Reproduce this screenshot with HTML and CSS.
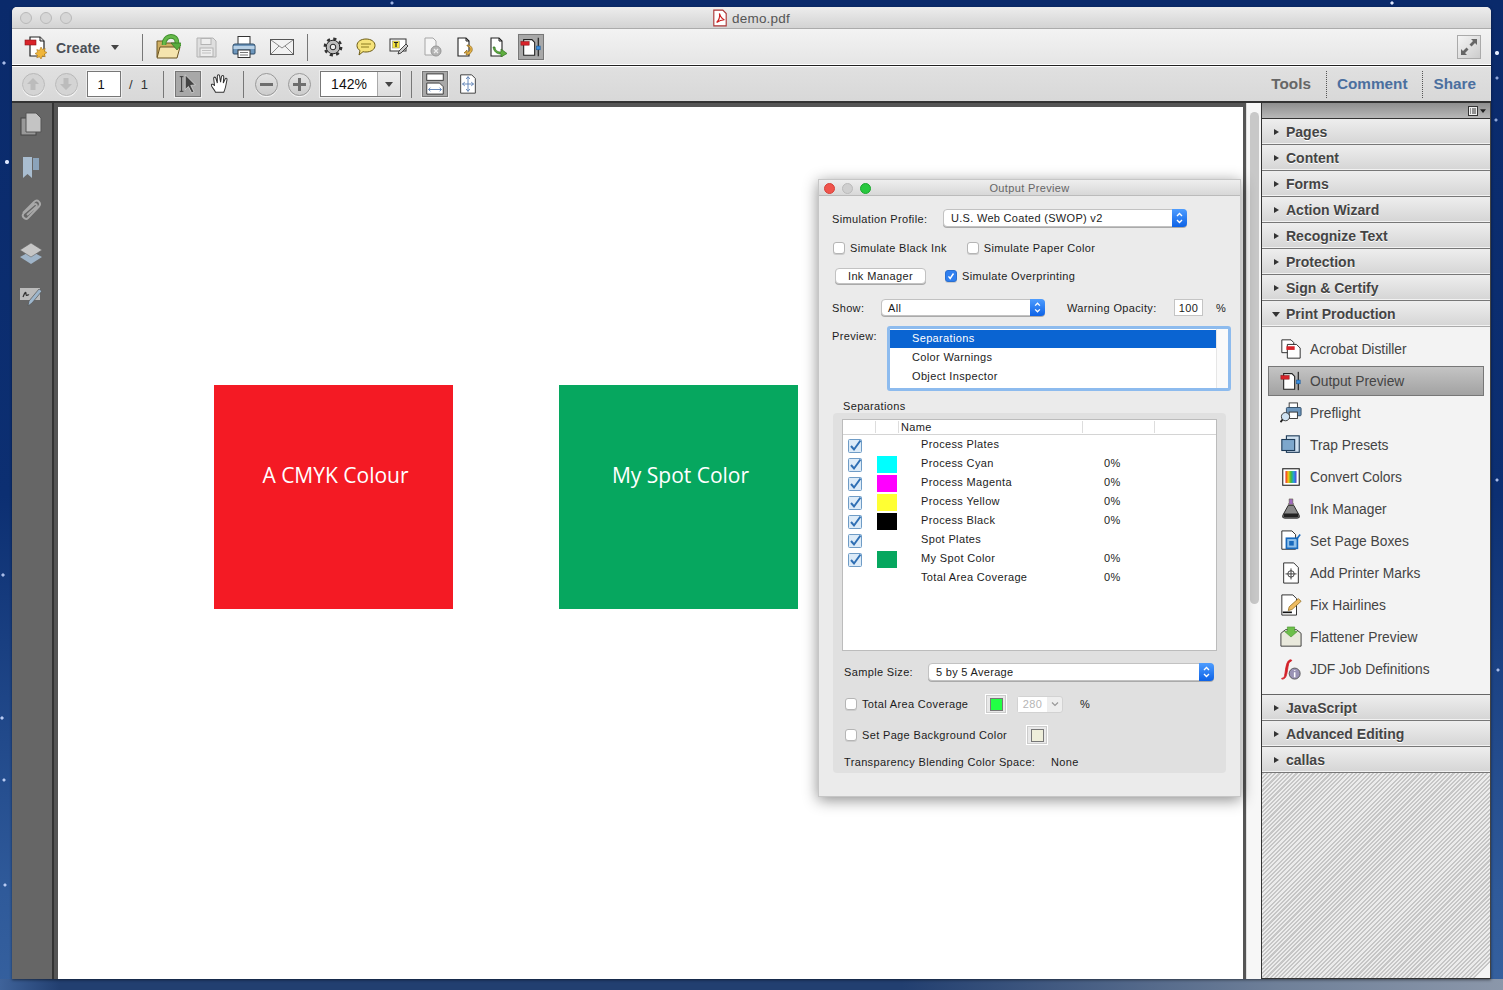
FILE: index.html
```html
<!DOCTYPE html>
<html lang="en">
<head>
<meta charset="utf-8">
<title>demo.pdf</title>
<link rel="stylesheet" href="styles.css">
</head>
<body>
<svg class="defs" width="0" height="0">
  <symbol id="tick" viewBox="0 0 14 14">
    <rect x=".5" y=".5" width="13" height="13" rx="1" fill="#dcebf8" stroke="#6f9cc6"/>
    <path d="M3 7l3 3.5L12.5 1.5" fill="none" stroke="#2f6fb4" stroke-width="2"/>
  </symbol>
  <symbol id="updown" viewBox="0 0 14 18">
    <path d="M4.500 7L7 4.500 9.500 7M4.500 11L7 13.500 9.500 11" fill="none" stroke="#fff" stroke-width="1.400"/>
  </symbol>
  <symbol id="tri" viewBox="0 0 8 8"><path d="M2 1l5 3-5 3z" fill="#333"/></symbol>
  <symbol id="output" viewBox="0 0 24 24">
    <path d="M4 4h9l3 3v14H4z" fill="#fff" stroke="#222" stroke-width="1.200"/>
    <rect x="1" y="6" width="9" height="4" fill="#d8232a" stroke="#8a1519" stroke-width=".6"/>
    <path d="M20 2v20" stroke="#333" stroke-width="1.500"/>
    <rect x="18" y="11" width="4" height="4" fill="#3b8ede" stroke="#1b5c9c" stroke-width=".7"/>
  </symbol>
</svg>

<main class="window">
  <header class="titlebar">
    <div class="lights">
      <span class="light"></span><span class="light"></span><span class="light"></span>
    </div>
    <div class="doc-title">
      <svg class="title-icon" viewBox="0 0 16 16"><path d="M2.500 1h8l3 3v11h-11z" fill="#fff" stroke="#a33" stroke-width="1"/><path d="M5 12c2-2 3-5 2.500-8 1 3 2.500 5 4.500 5.500-2.500 0-5 1-7 2.500z" fill="none" stroke="#c22" stroke-width="1"/></svg>
      <span>demo.pdf</span>
    </div>
  </header>

  <div class="toolbar top">
    <div class="create">
      <svg class="ic24" viewBox="0 0 24 24"><path d="M6 2h10l4 4v15H6z" fill="#fff" stroke="#222" stroke-width="1.200"/><path d="M16 2v4h4" fill="#ddd" stroke="#222"/><rect x="1" y="5" width="11" height="5" fill="#d8232a" stroke="#8a1519" stroke-width=".6"/><path d="M17 12l1.500 2.500 2.700-1-.7 2.800 2.500 1.200-2.500 1.500.7 2.800-2.700-1L17 24l-1.500-2.200-2.700 1 .7-2.800-2.500-1.500 2.500-1.200-.7-2.800 2.700 1z" fill="#f0b63a" stroke="#a9761a" stroke-width=".6"/></svg>
      <span class="create-label">Create</span>
      <svg class="caret" viewBox="0 0 8 5"><path d="M0 0h8L4 5z" fill="#444"/></svg>
    </div>
    <span class="sep"></span>
    <div class="group wide">
      <span class="btn"><svg class="ic26" viewBox="0 0 26 26"><path d="M2 7h7l2 2h11v14H2z" fill="#cfae62" stroke="#6b5423"/><path d="M2 24l3-11h20l-3 11z" fill="#f5e4ae" stroke="#6b5423"/><path d="M9 11C9 4 14 1 19 3c2 1 3 3 3 6" fill="none" stroke="#3f8f2c" stroke-width="4.600"/><path d="M9 11C9 4 14 1 19 3c2 1 3 3 3 6" fill="none" stroke="#66b94a" stroke-width="2.800"/><path d="M16 9h12l-6 7z" fill="#58ad3e" stroke="#2e6f20" stroke-width=".7"/></svg></span>
      <span class="btn"><svg class="ic24 dim" viewBox="0 0 24 24"><path d="M3 3h16l3 3v16H3z" fill="#ddd" stroke="#aaa"/><rect x="7" y="3.500" width="10" height="6" fill="#eee" stroke="#aaa"/><rect x="6" y="13" width="13" height="8.500" fill="#eee" stroke="#aaa"/><path d="M8 15.500h9M8 18h9" stroke="#bbb"/></svg></span>
      <span class="btn"><svg class="ic24" viewBox="0 0 24 24"><rect x="6" y="1.500" width="12" height="8" fill="#fff" stroke="#333"/><path d="M3 9h18q2 0 2 2v7q0 1-1 1H2q-1 0-1-1v-7q0-2 2-2z" fill="#6d96bc" stroke="#2d4a66"/><rect x="1.500" y="11" width="21" height="3" fill="#b9d1e6"/><rect x="6" y="15" width="12" height="7.500" fill="#fff" stroke="#333"/><path d="M8 17.500h8M8 20h8" stroke="#777"/></svg></span>
      <span class="btn"><svg class="ic24-w" viewBox="0 0 24 18"><rect x=".5" y="1.500" width="23" height="15" fill="#f2f2f2" stroke="#555"/><path d="M1 2l11 8 11-8M1 16l8-8M23 16l-8-8" fill="none" stroke="#888"/></svg></span>
    </div>
    <span class="sep"></span>
    <div class="group">
      <span class="btn"><svg class="ic20" viewBox="0 0 20 20"><circle cx="10" cy="10" r="8.200" fill="none" stroke="#333" stroke-width="2.400" stroke-dasharray="3.200 3.240"/><circle cx="10" cy="10" r="6.800" fill="#bdbdbd" stroke="#222"/><circle cx="10" cy="10" r="2.800" fill="#eee" stroke="#222"/></svg></span>
      <span class="btn"><svg class="ic20" viewBox="0 0 20 18"><path d="M10 1c5 0 9 2.500 9 6.500S15 14 10 14c-1 0-2 0-3-.3L3 17l1-4.500C2 11.500 1 9.500 1 7.500 1 3.500 5 1 10 1z" fill="#f6e37a" stroke="#6c5c16"/><path d="M5 6h10M5 9h8" stroke="#8b7a20"/></svg></span>
      <span class="btn"><svg class="ic20" viewBox="0 0 20 20"><rect x="1" y="2" width="16" height="12" fill="#fff" stroke="#333"/><rect x="3.500" y="4" width="7" height="7" fill="#f5e23a" stroke="#888" stroke-width=".5"/><path d="M5 5.500h4M7 5.500v4.500" stroke="#222" stroke-width="1.200"/><path d="M9 17l1-3 7-7 2 2-7 7z" fill="#ccc" stroke="#333" stroke-width=".9"/></svg></span>
      <span class="btn"><svg class="ic20 dim" viewBox="0 0 20 20"><path d="M3 1h8l3 3v14H3z" fill="#f7f7f7" stroke="#999"/><circle cx="14" cy="14" r="5" fill="#aaa" stroke="#888"/><path d="M12 12l4 4M16 12l-4 4" stroke="#eee" stroke-width="1.200"/></svg></span>
      <span class="btn"><svg class="ic20" viewBox="0 0 20 20"><path d="M3 1h8l3 3v15H3z" fill="#fff" stroke="#222" stroke-width="1.100"/><path d="M11 1v3h3" fill="none" stroke="#222"/><path d="M12 8c4 0 6 3 5 6-1 2-3 4-6 4l1-2-3 0 3-3v2c2 0 3-1 3-3 0-1-1-3-3-3z" fill="#e8b54a" stroke="#8c6516" stroke-width=".7"/></svg></span>
      <span class="btn"><svg class="ic20" viewBox="0 0 20 20"><path d="M3 1h8l3 3v15H3z" fill="#fff" stroke="#222" stroke-width="1.100"/><path d="M11 1v3h3" fill="none" stroke="#222"/><path d="M7 10c0 3 2 5 6 5v-3l6 4.500-6 3.500v-3c-4 0-7-2-8-7z" fill="#5fae3f" stroke="#2e6f20" stroke-width=".7"/></svg></span>
      <span class="btn active"><svg class="ic22" viewBox="0 0 24 24"><use href="#output"/></svg></span>
    </div>
    <span class="expand"><svg class="ic18" viewBox="0 0 18 18"><path d="M11 1h6v6l-2-2-3.500 3.500-2-2L13 3zM7 17H1v-6l2 2 3.500-3.500 2 2L5 15z" fill="#666"/></svg></span>
  </div>

  <div class="toolbar sub">
    <div class="group nav">
      <span class="btn"><span class="round"><svg class="ic14" viewBox="0 0 14 14"><path d="M7 1l6 6H9.500v6h-5V7H1z" fill="#bcbcbc"/></svg></span></span>
      <span class="btn"><span class="round"><svg class="ic14" viewBox="0 0 14 14"><path d="M7 13L1 7h3.500V1h5v6H13z" fill="#bcbcbc"/></svg></span></span>
    </div>
    <span class="page-input">1</span>
    <span class="page-total"><span>/</span><span>1</span></span>
    <span class="sep"></span>
    <div class="group tools-group">
      <span class="btn active"><svg class="ic22" viewBox="0 0 24 24"><path d="M3 4h4M3 20h4M5 4v16" stroke="#333" fill="none"/><path d="M9 2l11 11-5 .5 3.500 7-2.500 1.200-3.500-7L9 18z" fill="#444" stroke="#eee" stroke-width=".7"/></svg></span>
      <span class="btn"><svg class="ic22" viewBox="0 0 24 24"><path d="M6 21c-1-3-5-6-4.500-8 .5-1.500 2.500-.5 3.500 1L4 6c0-2 2-2 2.500 0L8 11 8 3.500c0-2 2.500-2 2.500 0L11.500 10l1-6c.5-2 2.500-1.500 2.500 0l-.5 7 2-4.500c1-1.500 2.500-.5 2 1L17 15c-.5 2-1 4-2 6z" fill="#fff" stroke="#333" stroke-width="1.100"/></svg></span>
    </div>
    <span class="sep"></span>
    <div class="group zoom-group">
      <span class="btn"><span class="round big"><i class="minus"></i></span></span>
      <span class="btn"><span class="round big"><i class="minus"></i><i class="minus vert"></i></span></span>
    </div>
    <div class="zoom-box">
      <span class="zoom-value">142%</span>
      <span class="zoom-drop"><svg class="caret" viewBox="0 0 8 5"><path d="M0 0h8L4 5z" fill="#444"/></svg></span>
    </div>
    <span class="sep"></span>
    <div class="group fit-group">
      <span class="btn active"><svg class="ic22" viewBox="0 0 24 24"><rect x="3" y="1" width="18" height="7" fill="#fff" stroke="#333"/><path d="M3 11h14l4 4v8H3z" fill="#fff" stroke="#333"/><path d="M5 18h14M5 18l2-2M5 18l2 2M19 18l-2-2M19 18l-2 2" stroke="#5a7fb5" fill="none"/></svg></span>
      <span class="btn"><svg class="ic22" viewBox="0 0 24 24"><path d="M4 2h12l4 4v16H4z" fill="#fff" stroke="#333"/><path d="M12 4v16M6 12h12M12 4l-2 2.500M12 4l2 2.500M12 20l-2-2.500M12 20l2-2.500M6 12l2.500-2M6 12l2.500 2M18 12l-2.500-2M18 12l-2.500 2" stroke="#5a7fb5" fill="none"/></svg></span>
    </div>
    <nav class="tabs">
      <span class="tab tools">Tools</span>
      <span class="tab comment">Comment</span>
      <span class="tab share">Share</span>
    </nav>
  </div>

  <div class="body">
    <aside class="rail">
      <svg class="ic24" viewBox="0 0 24 24"><rect x="2" y="6" width="15" height="17" fill="#999" stroke="#444"/><path d="M7 1h10l5 5v14H7z" fill="#c4c4c4" stroke="#555"/></svg>
      <svg class="ic24" viewBox="0 0 24 24"><path d="M4 2h9v21l-4.500-4L4 23z" fill="#a9bdd0"/><path d="M14 3h6v12h-6z" fill="#8ba3ba"/></svg>
      <svg class="ic24" viewBox="0 0 24 24"><path d="M4 15L15 4c3.500-3.500 8 1 5 4.500L9 20c-2.500 2.500-7-1.500-4.500-4.500L15 6.500c2-1.500 3.500.5 2.500 2L8 17" fill="none" stroke="#a8a8a8" stroke-width="1.900"/></svg>
      <svg class="ic24" viewBox="0 0 24 24"><path d="M12 10l11 6-11 7-11-7z" fill="#9fb4c8"/><path d="M12 2l11 7-11 7L1 9z" fill="#c6c6c6" stroke="#666" stroke-width=".6"/></svg>
      <svg class="ic24" viewBox="0 0 24 24"><rect x="1" y="4" width="20" height="12" fill="#bbb"/><path d="M4 13c2-5 3-6 3-3s2 0 3 1" fill="none" stroke="#333" stroke-width="1.200"/><path d="M9 22l1-5 10-12 3 2-10 12z" fill="#9db6cc" stroke="#555" stroke-width=".7"/></svg>
    </aside>

    <section class="doc">
      <div class="page">
        <div class="swatch-card red">A CMYK Colour</div>
        <div class="swatch-card green">My Spot Color</div>
      </div>
    </section>

    <div class="scrollbar"><span class="thumb"></span></div>

    <aside class="panel">
      <div class="panel-top">
        <svg class="ic10" viewBox="0 0 10 10"><rect x=".5" y=".5" width="9" height="9" fill="#eee" stroke="#333"/><path d="M2 3h1M2 5h1M2 7h1M4 3h4M4 5h4M4 7h4" stroke="#333"/></svg>
        <svg class="caret small" viewBox="0 0 8 5"><path d="M0 0h8L4 5z" fill="#222"/></svg>
      </div>
      <div class="sec"><svg class="tri" viewBox="0 0 8 8"><use href="#tri"/></svg>Pages</div>
      <div class="sec"><svg class="tri" viewBox="0 0 8 8"><use href="#tri"/></svg>Content</div>
      <div class="sec"><svg class="tri" viewBox="0 0 8 8"><use href="#tri"/></svg>Forms</div>
      <div class="sec"><svg class="tri" viewBox="0 0 8 8"><use href="#tri"/></svg>Action Wizard</div>
      <div class="sec"><svg class="tri" viewBox="0 0 8 8"><use href="#tri"/></svg>Recognize Text</div>
      <div class="sec"><svg class="tri" viewBox="0 0 8 8"><use href="#tri"/></svg>Protection</div>
      <div class="sec"><svg class="tri" viewBox="0 0 8 8"><use href="#tri"/></svg>Sign &amp; Certify</div>
      <div class="sec open"><svg class="tri" viewBox="0 0 8 8"><path d="M0 2h8L4 7z" fill="#333"/></svg>Print Production</div>
      <ul class="tools-list">
        <li><svg class="li-ic" viewBox="0 0 24 24"><path d="M2 2h10l3 3v11H2z" fill="#fff" stroke="#222"/><path d="M8 7h10l4 4v11H8z" fill="#fff" stroke="#222"/><rect x="7" y="9" width="9" height="4" fill="#d8232a"/></svg>Acrobat Distiller</li>
        <li class="current"><svg class="li-ic" viewBox="0 0 24 24"><use href="#output"/></svg>Output Preview</li>
        <li><svg class="li-ic" viewBox="0 0 24 24"><rect x="10" y="1" width="9" height="6" fill="#fff" stroke="#333"/><rect x="7" y="6" width="16" height="9" rx="1" fill="#6d96bc" stroke="#2d4a66"/><rect x="10" y="11" width="9" height="7" fill="#fff" stroke="#333"/><circle cx="6" cy="16" r="4.500" fill="#cfe2f2" stroke="#333"/><path d="M3 19l-2.500 3" stroke="#222" stroke-width="2"/></svg>Preflight</li>
        <li><svg class="li-ic" viewBox="0 0 24 24"><rect x="7" y="2" width="14" height="18" fill="#cfe0ef" stroke="#1d3a57" stroke-width="1.200"/><rect x="2" y="6" width="14" height="12" fill="#7da7cc" stroke="#1d3a57" stroke-width="1.200"/></svg>Trap Presets</li>
        <li><svg class="li-ic" viewBox="0 0 24 24"><defs><linearGradient id="rainbow"><stop offset="0" stop-color="#e22"/><stop offset=".25" stop-color="#f6c613"/><stop offset=".5" stop-color="#3dbb3d"/><stop offset=".75" stop-color="#22a0e0"/><stop offset="1" stop-color="#5a3fd0"/></linearGradient></defs><rect x="3" y="3" width="18" height="18" fill="#fff" stroke="#222" stroke-width="1.200"/><rect x="6" y="5.500" width="12" height="13" fill="url(#rainbow)"/></svg>Convert Colors</li>
        <li><svg class="li-ic" viewBox="0 0 24 24"><path d="M10 1h4v4l1 2H9l1-2z" fill="#a06bc0" stroke="#553" stroke-width=".6"/><path d="M9 8h6l6 11q1 3-2 3H5q-3 0-2-3z" fill="#888" stroke="#222"/><path d="M4 17h16v3q0 1-1 1H5q-1 0-1-1z" fill="#222"/></svg>Ink Manager</li>
        <li><svg class="li-ic" viewBox="0 0 24 24"><path d="M2 1h11l4 4v16H2z" fill="#fff" stroke="#222"/><rect x="7" y="9" width="12" height="11" fill="#8fc0ea" stroke="#1769bd" stroke-width="1.800"/><rect x="10" y="12" width="5" height="5" fill="#1769bd"/><path d="M22 5l-4 5" stroke="#1769bd" stroke-width="1.800"/></svg>Set Page Boxes</li>
        <li><svg class="li-ic" viewBox="0 0 24 24"><path d="M4 1h11l5 5v17H4z" fill="#fff" stroke="#222"/><circle cx="12" cy="13" r="3.500" fill="none" stroke="#333"/><path d="M12 7v12M6 13h12" stroke="#333"/></svg>Add Printer Marks</li>
        <li><svg class="li-ic" viewBox="0 0 24 24"><path d="M2 1h12l4 4v18H2z" fill="#fff" stroke="#222"/><path d="M3 20h10" stroke="#111" stroke-width="1.800"/><path d="M9 18l1-4 10-9 3 3-10 9z" fill="#eebc62" stroke="#8c6516" stroke-width=".8"/></svg>Fix Hairlines</li>
        <li><svg class="li-ic" viewBox="0 0 24 24"><path d="M1 8l5-4h12l5 4v14H1z" fill="#e9e9dc" stroke="#333"/><path d="M8 1h8v5h3l-7 6-7-6h3z" fill="#6dc04a" stroke="#3f8a27" stroke-width=".6"/></svg>Flattener Preview</li>
        <li><svg class="li-ic" viewBox="0 0 24 24"><path d="M2 22c3 0 3-2 4-9 1-6 2-11 6-11 1 0 1 2-1 2-2 1-2 5-3 10-1 6-2 9-6 9z" fill="#d32027" stroke="#d32027"/><circle cx="16" cy="17" r="6" fill="#9a93b5" stroke="#555"/><path d="M16 13v1M16 15.500V21" stroke="#fff" stroke-width="1.700"/></svg>JDF Job Definitions</li>
      </ul>
      <div class="sec"><svg class="tri" viewBox="0 0 8 8"><use href="#tri"/></svg>JavaScript</div>
      <div class="sec"><svg class="tri" viewBox="0 0 8 8"><use href="#tri"/></svg>Advanced Editing</div>
      <div class="sec"><svg class="tri" viewBox="0 0 8 8"><use href="#tri"/></svg>callas</div>
      <div class="hatch"></div>
    </aside>
  </div>

  <section class="palette">
    <header class="pal-title">
      <span class="pal-lights"><i class="close"></i><i class="mini"></i><i class="zoom"></i></span>
      <span>Output Preview</span>
    </header>
    <div class="pal-body">
      <div class="row row-profile">
        <span class="lbl-profile">Simulation Profile:</span>
        <span class="select sel-profile">U.S. Web Coated (SWOP) v2<b class="stepper"><svg viewBox="0 0 14 18"><use href="#updown"/></svg></b></span>
      </div>
      <div class="row row-sim">
        <label class="check"><i class="cb"></i>Simulate Black Ink</label>
        <label class="check second"><i class="cb"></i>Simulate Paper Color</label>
      </div>
      <div class="row row-ink">
        <span class="push-button">Ink Manager</span>
        <label class="check over"><i class="cb on"><svg viewBox="0 0 12 12"><path d="M3 6.500l2 2.500 4-6" fill="none" stroke="#fff" stroke-width="1.700"/></svg></i>Simulate Overprinting</label>
      </div>
      <div class="row row-show">
        <span class="lbl-show">Show:</span>
        <span class="select sel-show">All<b class="stepper"><svg viewBox="0 0 14 18"><use href="#updown"/></svg></b></span>
        <span class="lbl-warn">Warning Opacity:</span>
        <span class="opacity">100</span>
        <span class="pct">%</span>
      </div>
      <div class="row row-preview">
        <span class="lbl-preview">Preview:</span>
        <div class="listbox">
          <div class="opt sel">Separations</div>
          <div class="opt">Color Warnings</div>
          <div class="opt">Object Inspector</div>
        </div>
      </div>
      <div class="sep-label">Separations</div>
      <div class="groupbox">
        <div class="table">
          <div class="thead"><span></span><span></span><span>Name</span><span></span><span></span></div>
          <div class="tr"><svg class="tk" viewBox="0 0 14 14"><use href="#tick"/></svg><span></span><span class="nm">Process Plates</span><span></span></div>
          <div class="tr"><svg class="tk" viewBox="0 0 14 14"><use href="#tick"/></svg><span class="sw cyan"></span><span class="nm">Process Cyan</span><span class="pv">0%</span></div>
          <div class="tr"><svg class="tk" viewBox="0 0 14 14"><use href="#tick"/></svg><span class="sw magenta"></span><span class="nm">Process Magenta</span><span class="pv">0%</span></div>
          <div class="tr"><svg class="tk" viewBox="0 0 14 14"><use href="#tick"/></svg><span class="sw yellow"></span><span class="nm">Process Yellow</span><span class="pv">0%</span></div>
          <div class="tr"><svg class="tk" viewBox="0 0 14 14"><use href="#tick"/></svg><span class="sw black"></span><span class="nm">Process Black</span><span class="pv">0%</span></div>
          <div class="tr"><svg class="tk" viewBox="0 0 14 14"><use href="#tick"/></svg><span></span><span class="nm">Spot Plates</span><span></span></div>
          <div class="tr"><svg class="tk" viewBox="0 0 14 14"><use href="#tick"/></svg><span class="sw spot"></span><span class="nm">My Spot Color</span><span class="pv">0%</span></div>
          <div class="tr"><span></span><span></span><span class="nm">Total Area Coverage</span><span class="pv">0%</span></div>
        </div>
        <div class="row row-sample">
          <span class="lbl-sample">Sample Size:</span>
          <span class="select sel-sample">5 by 5 Average<b class="stepper"><svg viewBox="0 0 14 18"><use href="#updown"/></svg></b></span>
        </div>
        <div class="row row-total">
          <label class="check tac"><i class="cb"></i>Total Area Coverage</label>
          <span class="well"><i class="lime"></i></span>
          <span class="combo"><span>280</span><b><svg viewBox="0 0 10 8"><path d="M2 2.500l3 3 3-3" fill="none" stroke="#999" stroke-width="1.200"/></svg></b></span>
          <span class="pct2">%</span>
        </div>
        <div class="row row-bg">
          <label class="check spb"><i class="cb"></i>Set Page Background Color</label>
          <span class="well"><i class="paper"></i></span>
        </div>
        <div class="row row-trans">
          <span class="lbl-trans">Transparency Blending Color Space:</span>
          <span>None</span>
        </div>
      </div>
    </div>
  </section>
</main>
</body>
</html>
```

FILE: styles.css
```css
* { box-sizing: border-box; }
html, body { margin: 0; height: 100%; }
body {
  width: 1503px; height: 990px; overflow: hidden;
  padding: 7px 12px 11px;
  font-family: "Liberation Sans", Arial, sans-serif;
  background:
    radial-gradient(circle at 7px 162px, #dfe8ff 0 1.500px, transparent 2.500px),
    radial-gradient(circle at 4px 63px, #a9bce8 0 1.200px, transparent 2px),
    radial-gradient(circle at 3px 575px, #a9bce8 0 1.200px, transparent 2px),
    radial-gradient(circle at 2px 718px, #b9cbf3 0 1.200px, transparent 2px),
    radial-gradient(circle at 4px 780px, #b9cbf3 0 1px, transparent 2px),
    radial-gradient(circle at 5px 885px, #b9cbf3 0 1px, transparent 2px),
    radial-gradient(circle at 1497px 53px, #e6eeff 0 1.500px, transparent 2.500px),
    radial-gradient(circle at 1497px 78px, #8fa6d8 0 1px, transparent 2px),
    radial-gradient(circle at 1496px 120px, #8fa6d8 0 1px, transparent 2px),
    radial-gradient(circle at 1497px 480px, #a9bce8 0 1px, transparent 2px),
    radial-gradient(circle at 1498px 670px, #a9bce8 0 1px, transparent 2px),
    radial-gradient(circle at 392px 3px, #9fb4e4 0 1px, transparent 2px),
    radial-gradient(circle at 1392px 3px, #dfe8ff 0 1.200px, transparent 2px),
    linear-gradient(90deg, #3f639a 0, #223f70 4%, #223f70 60%, #6f8099 85%, #8b97aa 100%) 0 100% / 100% 11px no-repeat,
    linear-gradient(180deg, #0a2a6b 0, #0c2f72 50%, #2f5a9a 90%, #35609e 100%);
  background-repeat: no-repeat;
}
.defs { position: absolute; }
.ic24 { width: 24px; height: 24px; flex: none; }
.ic24-w { width: 24px; height: 18px; }
.ic26 { width: 26px; height: 26px; }
.ic22 { width: 22px; height: 22px; }
.ic20 { width: 20px; height: 20px; }
.ic18 { width: 18px; height: 18px; }
.ic14 { width: 14px; height: 14px; display: block; }
.ic10 { width: 10px; height: 10px; }
.dim { opacity: .85; }
.caret { width: 8px; height: 5px; flex: none; }
.caret.small { width: 6px; height: 4px; }

.window {
  position: relative;
  width: 1479px; height: 972px;
  display: flex; flex-direction: column;
  border-radius: 5px 5px 0 0;
  overflow: hidden;
  background: #ddd;
  box-shadow: 0 1px 3px rgba(0,0,0,.5);
}

/* title */
.titlebar {
  position: relative;
  height: 22px; flex: none;
  background: linear-gradient(#ededed, #d3d3d3);
  border-bottom: 1px solid #ababab;
  display: flex; align-items: center; justify-content: center;
}
.lights { position: absolute; left: 8px; top: 5px; display: flex; gap: 8px; }
.light { width: 12px; height: 12px; border-radius: 50%; background: #d6d6d6; border: 1px solid #b9b9b9; }
.doc-title { display: flex; align-items: center; gap: 3px; font-size: 13.500px; letter-spacing: .2px; color: #555; padding: 1px 2px 0 0; }
.title-icon { width: 18px; height: 18px; }

/* toolbars */
.toolbar { display: flex; align-items: center; flex: none; }
.toolbar.top {
  height: 37px; padding-left: 11px; padding-right: 10px;
  background: linear-gradient(#f3f3f3, #e5e5e5);
  border-bottom: 1px solid #222;
  box-shadow: inset 0 -1px 0 #fff;
}
.toolbar.sub {
  height: 37px; padding-left: 8px;
  background: linear-gradient(#e0e0e0, #d8d8d8);
  border-top: 1px solid #fff;
  border-bottom: 2px solid #333;
}
.create { display: flex; align-items: center; width: 119px; padding-left: 1px; }
.create-label { margin-left: 8px; font-size: 14px; font-weight: 700; color: #4a4f57; letter-spacing: .1px; padding-top: 1px; }
.create .caret { margin-left: 11px; }
.sep { width: 1px; height: 27px; background: #777; flex: none; }
.group { display: flex; gap: 7px; }
.group.wide { gap: 12px; margin: 0 12px; }
.toolbar.top > .group:not(.wide) { margin-left: 12px; }
.btn { width: 26px; height: 26px; display: flex; align-items: center; justify-content: center; flex: none; }
.btn.active { background: #a8a8a8; border: 1px solid #777; box-shadow: 0 0 0 1px #eee; }
.expand {
  margin-left: auto; width: 24px; height: 24px;
  border: 1px solid #aaa; background: linear-gradient(135deg, #f5f5f5, #ccc);
  display: flex; align-items: center; justify-content: center;
}
.round {
  width: 23px; height: 23px; border-radius: 50%;
  background: #d4d4d4; border: 1px solid #b8b8b8; box-shadow: 0 1px 0 #f4f4f4;
  display: flex; align-items: center; justify-content: center;
  position: relative;
}
.round.big { background: linear-gradient(#e4e4e4, #ccc); border-color: #999; }
.minus { position: absolute; left: 4px; top: 9px; width: 13px; height: 3.500px; background: #6e6e6e; }
.minus.vert { left: 9px; top: 4px; width: 3.500px; height: 13px; }
.page-input {
  margin-left: 8px; width: 34px; height: 26px;
  background: #fff; border: 1px solid #777; box-shadow: 0 0 0 1px #eee;
  font-size: 13px; color: #111; display: flex; align-items: center; justify-content: center;
  padding-right: 6px;
}
.page-total { display: flex; gap: 8px; margin: 0 16px 0 8px; font-size: 13px; color: #333; width: 18px; white-space: nowrap; }
.tools-group { margin: 0 9px 0 11px; }
.zoom-group { margin: 0 8px 0 9px; }
.fit-group { margin-left: 10px; }
.zoom-box {
  display: flex; width: 81px; height: 26px; margin-right: 10px;
  background: #fff; border: 1px solid #777; box-shadow: 0 0 0 1px #eee;
}
.zoom-value { width: 56px; font-size: 14px; color: #111; display: flex; align-items: center; justify-content: center; }
.zoom-drop { flex: 1; background: linear-gradient(#eee, #ddd); border-left: 1px solid #aaa; display: flex; align-items: center; justify-content: center; }
.tabs { margin-left: auto; display: flex; height: 27px; align-items: center; padding-right: 15px; }
.tab { font-size: 15.300px; font-weight: 700; color: #4b6f9f; height: 27px; line-height: 25px; border-right: 1px dotted #555; }
.tab.tools { color: #666; padding: 0 15px 0 0; }
.tab.comment { padding: 0 15px 0 10px; }
.tab.share { padding-left: 10px; border-right: 0; }

/* body */
.body { flex: 1; min-height: 0; display: flex; background: #555; }
.rail {
  width: 42px; flex: none; background: #666; border-right: 2px solid #333;
  display: flex; flex-direction: column; align-items: center; gap: 19px; padding: 9px 2px 0 0;
}
.doc { flex: 1; min-width: 0; padding: 4px 3px 0 4px; background: #555; }
.page {
  height: 100%; background: #fff;
  display: flex; gap: 106px; padding: 278px 0 0 156px;
}
.swatch-card {
  width: 239px; height: 224px; flex: none;
  display: flex; align-items: center; justify-content: center;
  font-family: "Open Sans", sans-serif; font-size: 21px; color: #fff;
  padding: 0 0 44px 4px;
}
.red { background: #f41a24; }
.green { background: #06a75f; }
.scrollbar { width: 15px; flex: none; background: #f7f7f7; border-left: 1px solid #ddd; padding: 9px 3px; }
.thumb { display: block; width: 9px; height: 492px; border-radius: 5px; background: #c8c8c8; }

/* right panel */
.panel {
  width: 230px; flex: none; display: flex; flex-direction: column;
  border-left: 1px solid #333; border-right: 1px solid #444; border-bottom: 1px solid #333;
  background: #f3f3f3;
}
.panel-top {
  height: 16px; flex: none;
  background: linear-gradient(#8e8e8e, #b8b8b8);
  border-bottom: 1px solid #333;
  display: flex; align-items: center; justify-content: flex-end; gap: 2px; padding-right: 4px;
}
.sec {
  height: 26px; flex: none;
  display: flex; align-items: center;
  padding-left: 10px;
  font-size: 14px; font-weight: 700; color: #444;
  text-shadow: 0 1px 0 #fff;
  background: linear-gradient(#eee, #d5d5d5);
  border-bottom: 1px solid #777;
  box-shadow: inset 0 -1px 0 #f2f2f2;
}
.sec.open { border-bottom-color: #aaa; }
.tri { width: 8px; height: 8px; margin-right: 6px; flex: none; }
.tools-list {
  list-style: none; margin: 0; padding: 6px 6px 0;
  height: 368px; flex: none; background: #f3f3f3;
  border-bottom: 1px solid #666;
}
.tools-list li {
  height: 32px; padding-left: 12px;
  display: flex; align-items: center;
  font-size: 13.800px; color: #444;
}
.li-ic { width: 22px; height: 22px; margin-right: 8px; flex: none; }
.tools-list li.current {
  background: linear-gradient(#c4c4c4, #a2a2a2);
  border: 1px solid #777; margin: 1px 0; height: 30px; padding-left: 11px;
}
.hatch {
  flex: 1; position: relative;
  background: repeating-linear-gradient(135deg, #c6c6c6 0 1.500px, #ececec 1.500px 3px);
}
.hatch::after {
  content: ""; position: absolute; right: 0; bottom: 0; width: 15px; height: 15px;
  background: linear-gradient(135deg, transparent 50%, #f4f4f4 50%);
}

/* floating palette */
.palette {
  position: absolute; left: 806px; top: 172px;
  width: 423px; height: 618px;
  background: #ebebeb;
  border: 1px solid #c6c6c6;
  box-shadow: 0 3px 14px rgba(0,0,0,.45);
  font-size: 11px; letter-spacing: .35px; color: #1c1c1c;
}
.pal-title {
  position: relative; height: 16px;
  background: linear-gradient(#eee, #d8d8d8);
  border-bottom: 1px solid #bbb;
  display: flex; align-items: center; justify-content: center;
  color: #666;
}
.pal-lights { position: absolute; left: 5px; top: 3px; display: flex; gap: 7px; }
.pal-lights i { width: 11px; height: 11px; border-radius: 50%; }
.close { background: #f0544c; border: 1px solid #d5423a; }
.mini { background: #cfcfcf; border: 1px solid #bbb; }
.zoom { background: #28c83f; border: 1px solid #1ca62f; }
.pal-body { padding-left: 13px; }
.row { display: flex; align-items: center; }
.select {
  position: relative; display: flex; align-items: center; padding-left: 7px;
  background: #fff; border: 1px solid #c2c2c2; border-radius: 4px;
  box-shadow: 0 1px 0 #aaa;
  letter-spacing: .3px;
}
.stepper {
  position: absolute; right: -1px; top: -1px; bottom: -1px; width: 15px;
  border-radius: 0 4px 4px 0;
  background: linear-gradient(#4e9dff, #0d62e6);
}
.stepper svg { width: 15px; height: 100%; display: block; }
.check { display: flex; align-items: center; }
.cb {
  width: 12px; height: 12px; margin-right: 5px; flex: none;
  background: #fff; border: 1px solid #b5b5b5; border-radius: 3px;
  box-shadow: 0 1px 0 #ccc;
}
.cb.on { background: #2f7ff0; border-color: #2a6fd0; }
.cb.on svg { display: block; width: 10px; height: 10px; }

.row-profile { height: 18px; margin-top: 13px; }
.lbl-profile { width: 111px; padding-top: 2px; }
.sel-profile { width: 244px; height: 18px; }
.row-sim { height: 18px; margin-top: 12px; padding-left: 1px; }
.second { margin-left: 20px; }
.row-ink { height: 16px; margin-top: 11px; padding-left: 3px; }
.push-button {
  width: 91px; height: 16px; display: flex; align-items: center; justify-content: center;
  background: #fff; border: 1px solid #c2c2c2; border-radius: 4px; box-shadow: 0 1px 0 #aaa;
}
.over { margin-left: 19px; }
.row-show { height: 17px; margin-top: 15px; }
.lbl-show { width: 49px; }
.sel-show { width: 164px; height: 17px; padding-left: 6px; }
.lbl-warn { margin-left: 22px; width: 107px; }
.opacity {
  width: 29px; height: 17px; background: #fff; border: 1px solid #c4c4c4;
  display: flex; align-items: center; justify-content: center;
}
.pct { margin-left: 13px; }
.row-preview { height: 65px; margin-top: 10px; align-items: flex-start; }
.lbl-preview { width: 55px; margin-top: 4px; }
.listbox {
  width: 344px; height: 65px; background: #fff;
  border: 3px solid #8dbbee; border-radius: 3px;
  padding-top: 1px;
  position: relative;
}
.listbox::after {
  content: ""; position: absolute; right: 0; top: 0; bottom: 0; width: 11px;
  background: #fafafa; border-left: 1px solid #e6e6e6;
}
.opt { height: 19px; line-height: 17px; padding-left: 22px; }
.opt.sel { height: 18px; line-height: 17px; background: #0a64d2; color: #fff; margin-bottom: 1px; }
.sep-label { height: 14px; line-height: 14px; margin: 8px 0 0 11px; }
.groupbox {
  margin-left: 1px; width: 393px; height: 360px;
  background: #e0e0e0; border-radius: 4px;
  padding: 6px 9px 0 0;
}
.table {
  margin-left: 9px; width: 375px; height: 232px;
  background: #fff; border: 1px solid #bcbcbc;
}
.thead {
  height: 15px;
  display: grid; grid-template-columns: 33px 23px 184px 72px 1fr;
  border-bottom: 1px solid #d4d4d4;
}
.thead span { border-right: 1px solid #ddd; height: 12px; margin-top: 1px; line-height: 13px; padding-left: 2px; }
.thead span:last-child { border-right: 0; }
.tr {
  height: 19px;
  display: grid; grid-template-columns: 33px 23px 183px 60px;
  align-items: center;
}
.tk { width: 14px; height: 14px; margin-left: 5px; margin-top: 3px; }
.sw { width: 20px; height: 17px; display: block; margin: 2px 0 0 1px; }
.cyan { background: #00ffff; }
.magenta { background: #ff00ff; }
.yellow { background: #ffff33; }
.black { background: #000; }
.spot { background: #06a75f; }
.nm { padding: 0 0 2px 22px; white-space: nowrap; }
.pv { padding: 0 0 2px 22px; }
.row-sample { height: 18px; margin-top: 12px; padding-left: 11px; }
.lbl-sample { width: 84px; }
.sel-sample { width: 286px; height: 18px; }
.row-total { height: 20px; margin-top: 13px; padding-left: 12px; }
.tac { width: 140px; }
.well {
  width: 22px; height: 20px; background: #e8e8e8; border: 1px solid #fff; outline: 1px solid #ccc; outline-offset: -2px;
  display: flex; align-items: center; justify-content: center;
}
.well i { width: 13px; height: 13px; border: 1px solid #777; display: block; }
.lime { background: #22ff44; }
.paper { background: #eeeeda; }
.combo {
  margin-left: 10px; width: 46px; height: 17px;
  display: flex; border: 1px solid #d2d2d2; border-radius: 3px; background: #eee;
  color: #b5b5b5;
}
.combo span { width: 29px; background: #fff; text-align: center; line-height: 15px; }
.combo b { flex: 1; display: flex; align-items: center; justify-content: center; }
.combo svg { width: 10px; height: 8px; }
.pct2 { margin-left: 17px; }
.row-bg { height: 20px; margin-top: 11px; padding-left: 12px; }
.spb { width: 181px; }
.row-trans { height: 14px; margin-top: 10px; padding-left: 11px; }
.lbl-trans { width: 207px; }
```
